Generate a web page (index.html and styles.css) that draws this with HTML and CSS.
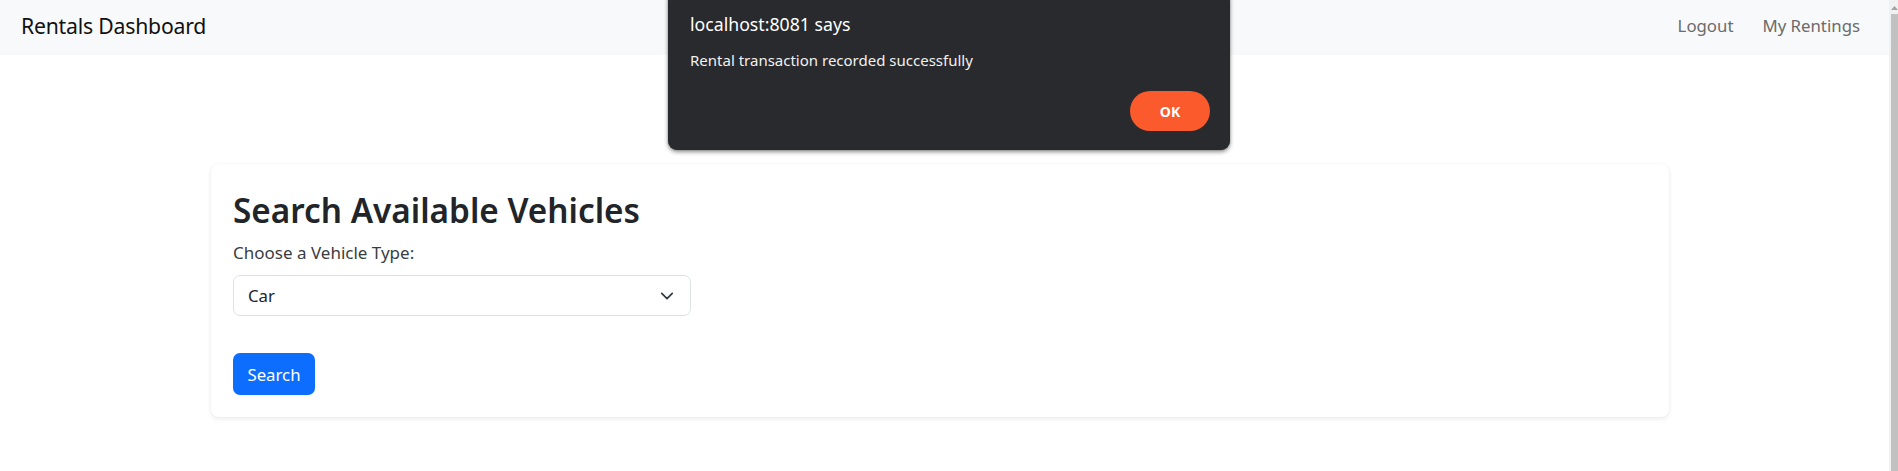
FILE: index.html
```html
<!DOCTYPE html>
<html lang="en">
<head>
<meta charset="utf-8">
<title>Rentals Dashboard</title>
<link rel="stylesheet" href="styles.css">
</head>
<body>
<div class="viewport">
  <div class="page">
    <nav class="navbar">
      <a class="brand" href="#">Rentals Dashboard</a>
      <div class="nav-links">
        <a class="nav-link" href="#">Logout</a>
        <a class="nav-link" href="#">My Rentings</a>
      </div>
    </nav>
    <main class="main">
      <section class="card">
        <h2 class="card-title">Search Available Vehicles</h2>
        <form class="search-form">
          <label class="form-label">Choose a Vehicle Type:</label>
          <div class="form-select">
            <span>Car</span>
            <svg class="chevron" width="14" height="14" viewBox="0 0 16 16"><path d="M2 5l6 6 6-6" fill="none" stroke="#343a40" stroke-width="2" stroke-linecap="round" stroke-linejoin="round"/></svg>
          </div>
          <button type="button" class="btn-primary">Search</button>
        </form>
      </section>
    </main>
    <div class="dialog">
      <div class="dialog-title">localhost:8081 says</div>
      <div class="dialog-message">Rental transaction recorded successfully</div>
      <div class="dialog-actions">
        <button type="button" class="dialog-ok">OK</button>
      </div>
    </div>
  </div>
  <div class="scrollbar">
    <div class="scroll-arrow"><svg width="7" height="5" viewBox="0 0 7 5"><path d="M0 5L3.5 1 7 5z" fill="#a3a3a3"/></svg></div>
    <div class="scroll-thumb"></div>
  </div>
</div>
</body>
</html>
```
FILE: styles.css
```css
* { box-sizing: border-box; }
html, body {
  margin: 0;
  padding: 0;
  background: #fff;
  font-family: "Noto Sans", "Open Sans", sans-serif;
  color: #212529;
}
.viewport {
  display: flex;
  height: 471px;
  overflow: hidden;
}
.page {
  flex: 1;
  position: relative;
}
.navbar {
  height: 55px;
  background: #f8f9fa;
  display: flex;
  align-items: center;
  justify-content: space-between;
  padding: 0 29px 5px 21px;
}
.brand {
  font-size: 21.2px;
  color: #111;
  text-decoration: none;
  letter-spacing: -0.2px;
}
.nav-links {
  display: flex;
  gap: 29px;
}
.nav-link {
  font-size: 16.8px;
  color: #6b6b6b;
  text-decoration: none;
}
.main {
  padding: 109px 220px 0 211px;
}
.card {
  background: #fff;
  border-radius: 7px;
  box-shadow: 0 2px 5px rgba(0,0,0,0.08), 0 0 1px rgba(0,0,0,0.08);
  padding: 25px 22px 22px;
  height: 253px;
}
.card-title {
  margin: 0 0 9px;
  font-size: 33.3px;
  font-weight: 600;
  line-height: 42px;
  color: #212529;
}
.search-form {
  display: flex;
  flex-direction: column;
  align-items: flex-start;
}
.form-label {
  font-size: 17px;
  line-height: 26px;
  color: #3a3d40;
  margin-bottom: 9px;
}
.form-select {
  width: 458px;
  height: 41px;
  border: 1px solid #dee2e6;
  border-radius: 7px;
  display: flex;
  align-items: center;
  justify-content: space-between;
  padding: 0 16px 0 14px;
  font-size: 16.8px;
  color: #212529;
}
.chevron { display: block; }
.btn-primary {
  margin-top: 37px;
  width: 82px;
  height: 42px;
  border: none;
  border-radius: 7px;
  background: #0d6efd;
  color: #fff;
  font-family: inherit;
  font-size: 16.8px;
  padding: 0;
}
.dialog {
  position: absolute;
  left: 668px;
  top: -10px;
  width: 562px;
  height: 160px;
  background: #292a2d;
  border-radius: 9px;
  box-shadow: 0 2px 4px rgba(0,0,0,0.45), 0 0 1px rgba(0,0,0,0.5);
  padding: 22px 20px 0 22px;
  color: #fff;
}
.dialog-title {
  font-size: 17.7px;
  line-height: 24px;
}
.dialog-message {
  margin-top: 14px;
  font-size: 15px;
  line-height: 20px;
  color: #f1f1f1;
}
.dialog-actions {
  display: flex;
  justify-content: flex-end;
  margin-top: 21px;
}
.dialog-ok {
  width: 80px;
  height: 40px;
  border: none;
  border-radius: 20px;
  background: #fa5a2c;
  color: #fff;
  font-family: inherit;
  font-weight: 700;
  font-size: 14px;
}
.scrollbar {
  width: 9px;
  background: #f1f1f1;
  display: flex;
  flex-direction: column;
}
.scroll-arrow {
  height: 14px;
  display: flex;
  align-items: center;
  justify-content: flex-end;
}
.scroll-thumb {
  flex: 1;
  margin-left: 2px;
  background: #c1c1c1;
}
```
